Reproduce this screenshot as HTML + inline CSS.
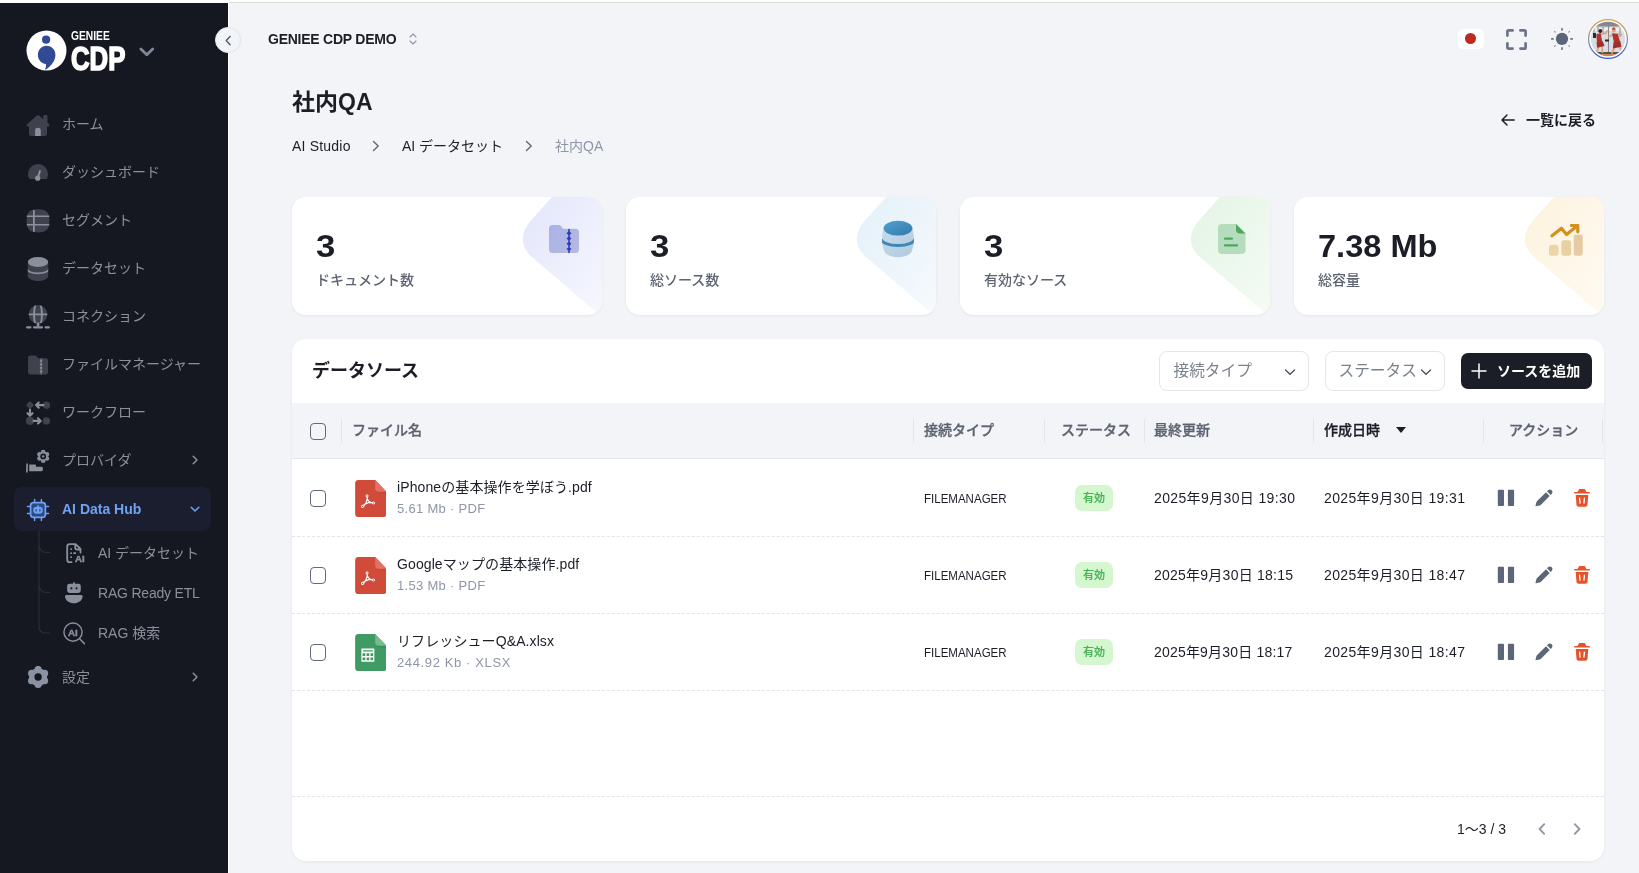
<!DOCTYPE html>
<html lang="ja">
<head>
<meta charset="utf-8">
<title>社内QA</title>
<style>
*{box-sizing:border-box;margin:0;padding:0}
html,body{width:1639px;height:873px;overflow:hidden;background:#fff}
body{font-family:"Liberation Sans","Noto Sans CJK JP",sans-serif;color:#1b1e27;position:relative;font-size:14px}
.topline{position:absolute;left:229px;top:2px;right:0;height:1px;background:#dddedc}
.main{position:absolute;left:229px;top:3px;right:0;bottom:0;background:#f3f4f8}
.sidebar{position:absolute;left:0;top:3px;width:228px;bottom:0;background:#151821}
.abs{position:absolute}
/* sidebar */
.logo-circle{position:absolute;left:27px;top:29px;width:39px;height:39px;border-radius:50%;background:#fff}
.logo-geniee{position:absolute;left:71px;top:29px;font-size:13.4px;font-weight:700;color:#fff;transform-origin:0 0;transform:scaleX(.765);line-height:14px;white-space:nowrap}
.logo-cdp{position:absolute;left:71px;top:41px;font-size:33px;font-weight:700;color:#fff;transform-origin:0 0;transform:scaleX(.78);line-height:36px;-webkit-text-stroke:1.6px #fff;white-space:nowrap}
.mi{position:absolute;left:14px;width:197px;height:44px;border-radius:8px;color:#8b909c;font-size:14px}
.mi .ic{position:absolute;left:12px;top:11px;width:24px;height:24px}
.mi .tx{position:absolute;left:48px;top:0;line-height:44px;white-space:nowrap}
.mi .ar{position:absolute;right:10px;top:16px;width:12px;height:12px}
.mi.active{background:#1a1e2e;color:#6fa1f5;font-weight:700}
.si{position:absolute;left:62px;height:40px;color:#8b909c;font-size:14px;width:150px}
.si .ic{position:absolute;left:0;top:8px;width:24px;height:24px}
.si .tx{position:absolute;left:36px;top:0;line-height:40px;white-space:nowrap}
/* header */
.collapse{position:absolute;left:215px;top:27px;width:26px;height:26px;border-radius:50%;background:#f3f4f8;border:1px solid #e6e8ee;box-shadow:0 0 2px rgba(0,0,0,.05)}
.ws{position:absolute;left:268px;top:29.500px;font-size:14px;letter-spacing:-.24px;font-weight:700;color:#1b1e27;line-height:18px;white-space:nowrap}
.title{position:absolute;left:292px;top:86px;font-size:23px;font-weight:700;line-height:32px;color:#1b1e27;white-space:nowrap}
.bc{position:absolute;top:136px;font-size:14px;line-height:20px;color:#1b1e27;white-space:nowrap}
.back{position:absolute;left:1526px;top:110px;font-size:14px;font-weight:700;line-height:20px;white-space:nowrap;color:#1b1e27}
/* cards */
.card{position:absolute;top:197px;width:310px;height:118px;background:#fff;border-radius:14px;box-shadow:0 1px 3px rgba(20,25,40,.06);overflow:hidden}
.card .num{position:absolute;left:24px;top:31px;transform-origin:0 50%;transform:scaleX(1.12);font-size:31px;font-weight:700;line-height:38px;color:#1b1e27;white-space:nowrap}
.card .lab{position:absolute;left:24px;top:73px;font-size:14px;line-height:20px;color:#5d6370;font-weight:500;white-space:nowrap}
.card svg.deco{position:absolute;right:0;top:0;width:90px;height:118px}
.card .cic{position:absolute;left:256px;top:26px;width:32px;height:32px}
/* table card */
.tcard{position:absolute;left:292px;top:339px;width:1312px;height:522px;background:#fff;border-radius:14px;box-shadow:0 1px 3px rgba(20,25,40,.06);overflow:hidden}
.tcard h2{position:absolute;left:20px;top:18px;font-size:18px;font-weight:700;line-height:28px;color:#1b1e27}
.sel{position:absolute;top:12px;height:40px;border:1px solid #e3e5ea;border-radius:8px;background:#fff;font-size:15.700px;color:#7a808c;line-height:37px;padding-left:13.500px;white-space:nowrap}
.addbtn{position:absolute;left:1169px;top:14px;width:131px;height:36px;border-radius:7px;background:#1b1e27;color:#fff;font-size:14px;font-weight:700;line-height:36px;white-space:nowrap}
.thead{position:absolute;left:0;top:64px;width:1312px;height:56px;background:#f3f4f8;border-bottom:1px solid #e3e5ea}
.th{position:absolute;top:0;line-height:54px;font-size:14px;font-weight:500;-webkit-text-stroke:.3px currentColor;color:#5d6370;white-space:nowrap}
.sep{position:absolute;top:16px;width:1px;height:24px;background:#e3e5ea}
.row{position:absolute;left:0;width:1312px;height:78px;border-bottom:1px dashed #e3e5ea}
.cb{position:absolute;left:17.500px;width:16.500px;height:16.500px;border:1.500px solid #5f6a7c;border-radius:4px;background:#fff}
.fic{position:absolute;left:62.600px;top:21px;width:31.600px;height:37.200px}
.fname{position:absolute;left:105px;top:18px;font-size:14px;line-height:20px;color:#1b1e27;white-space:nowrap;letter-spacing:.1px}
.fmeta{position:absolute;left:105px;top:40px;font-size:13px;line-height:20px;color:#8f96a6;white-space:nowrap;letter-spacing:.3px}
.ctype{position:absolute;left:632px;top:30px;font-size:12.600px;line-height:20px;color:#1b1e27;white-space:nowrap;transform-origin:0 50%;transform:scaleX(.915)}
.badge{position:absolute;left:783px;top:26px;width:38px;height:26px;border-radius:7px;background:#d4f7d0;color:#4bb257;font-size:11px;font-weight:500;-webkit-text-stroke:.2px currentColor;line-height:26px;text-align:center}
.dt{position:absolute;top:29px;font-size:14px;line-height:20px;color:#1b1e27;white-space:nowrap;letter-spacing:.37px}
.act{position:absolute;top:29px;width:20px;height:20px}
.foot{position:absolute;left:0;top:457px;width:1312px;border-top:1px dashed #e3e5ea;height:65px}
.pg{position:absolute;left:1165px;top:22px;font-size:14px;line-height:20px;color:#1b1e27;white-space:nowrap}
</style>
</head>
<body>
<div id="app" style="position:absolute;left:0;top:0;width:1639px;height:873px;will-change:transform">
<div class="topline"></div>
<div class="main"></div>
<aside class="sidebar"></aside>

<!-- SIDEBAR CONTENT -->
<div id="sb">
  <svg class="abs" style="left:26px;top:30px;width:41px;height:41px" viewBox="0 0 41 41"><circle cx="20.500" cy="20.500" r="20" fill="#fff"/><circle cx="20.100" cy="9.700" r="4.100" fill="#324a94"/><path fill="#324a94" d="M20.500 15.800c5.200 0 8.900 4 8.900 9.200 0 5.400-3.600 10.500-9.400 14.500-.5.300-1-.1-.8-.6.700-1.900 1-3.500.6-4.800-4.500-.7-7.900-4.400-7.900-9.100 0-5.200 3.700-9.200 8.600-9.200z"/></svg>
  <svg class="abs" style="left:139px;top:46px;width:16px;height:12px" viewBox="0 0 16 12"><path d="M1.900 3 7.800 8.800 13.700 3" fill="none" stroke="#7f8798" stroke-width="2.800" stroke-linecap="round" stroke-linejoin="round"/></svg>
  <div class="logo-geniee">GENIEE</div>
  <div class="logo-cdp">CDP</div>
<nav>
<div class="mi" style="top:102px"><svg class="ic" viewBox="0 0 24 24"><path fill="#3f424d" d="M10.900 2.600 1 11.200c-.9.800-.3 2.200.8 2.200H3v7.300A2.300 2.300 0 0 0 5.300 23h13.400a2.300 2.300 0 0 0 2.300-2.300v-7.300h1.200c1.100 0 1.700-1.400.8-2.200l-1.500-1.300V3.200c0-.6-.5-1.100-1.100-1.100h-2c-.6 0-1.100.5-1.100 1.100v3l-4.200-3.600a1.700 1.700 0 0 0-2.200 0z"/><path fill="#8a8f9c" d="M9.100 23v-5.300a2.850 2.850 0 0 1 5.700 0V23z"/></svg><span class="tx">ホーム</span></div>
<div class="mi" style="top:150px"><svg class="ic" viewBox="0 0 24 24"><path fill="#3f424d" d="M12 3A10 10 0 0 0 2 13c0 1.400.3 2.700.8 3.900.3.800 1.100 1.200 1.900 1.200h14.600c.8 0 1.600-.4 1.900-1.200.5-1.200.8-2.500.8-3.900A10 10 0 0 0 12 3z"/><path d="M13.900 10 11.800 17" stroke="#8a8f9c" stroke-width="2" stroke-linecap="round"/><circle cx="11.700" cy="17.200" r="2.600" fill="#8a8f9c"/></svg><span class="tx">ダッシュボード</span></div>
<div class="mi" style="top:198px"><svg class="ic" viewBox="0 0 24 24"><path fill="#3f424d" d="M12 .3c8.500 0 11.400 3 11.400 11.500S20.500 23.400 12 23.400.6 20.400.6 11.800 3.500.3 12 .3z"/><path fill="#8a8f9c" d="M7 1h1.800v21.700H7zM.8 6.400h22.500V8H.8zM.8 14.900h22.500v1.600H.8z"/></svg><span class="tx">セグメント</span></div>
<div class="mi" style="top:246px"><svg class="ic" viewBox="0 0 24 24"><clipPath id="sdb"><path d="M1.800 5v14c0 2.800 4.600 5 10.200 5s10.200-2.200 10.200-5V5z"/></clipPath><path fill="#3f424d" d="M1.800 5v14c0 2.800 4.600 5 10.200 5s10.200-2.200 10.200-5V5z"/><ellipse cx="12" cy="5" rx="10.200" ry="4.900" fill="#8a8f9c"/><path clip-path="url(#sdb)" fill="none" stroke="#8a8f9c" stroke-width="1.700" d="M1 11.500c0 2.800 4.800 4.800 11 4.800s11-2 11-4.800"/></svg><span class="tx">データセット</span></div>
<div class="mi" style="top:294px"><svg class="ic" viewBox="0 0 24 24"><clipPath id="sgl"><circle cx="12" cy="9.400" r="9.300"/></clipPath><circle cx="12" cy="9.400" r="9.300" fill="#3f424d"/><g clip-path="url(#sgl)" fill="none" stroke="#8a8f9c" stroke-width="1.900"><path d="M2 9.400h20M9.400 0C7.600 5 7.600 14 9.400 19M14.600 0c1.800 5 1.800 14 0 19"/></g><path fill="#8a8f9c" d="M10.700 17.500h2.700v4h-2.700z"/><g stroke="#8a8f9c" stroke-width="2.200" stroke-linecap="round"><path d="M1.100 22.300h3.300M8 22.300h8M19.600 22.300h3.300"/></g></svg><span class="tx">コネクション</span></div>
<div class="mi" style="top:342px"><svg class="ic" viewBox="0 0 24 24"><path fill="#3f424d" d="M2 5A2.500 2.500 0 0 1 4.500 2.500h4.200c.8 0 1.500.3 2 .9l1.100 1.300c.3.300.7.500 1.100.500h6.600A2.500 2.500 0 0 1 22 7.700v11.300a2.500 2.500 0 0 1-2.500 2.500h-15A2.500 2.500 0 0 1 2 19z"/><path fill="#8a8f9c" d="M14.600 5.500h1v16h-1zM13.500 8l1.600-1.500L16.700 8l-1.600 1.500zM13.500 11.500l1.600-1.500 1.600 1.500-1.600 1.500zM13.500 15l1.600-1.500 1.600 1.500-1.600 1.500zM13.500 18.500l1.600-1.500 1.600 1.500-1.600 1.500z"/></svg><span class="tx">ファイルマネージャー</span></div>
<div class="mi" style="top:390px"><svg class="ic" viewBox="0 0 24 24"><rect x="1.100" y="1.200" width="5.800" height="5.800" rx="1.200" transform="rotate(45 4 4.100)" fill="#3f424d"/><circle cx="20.400" cy="4.100" r="3.700" fill="#3f424d"/><rect x=".2" y="16.100" width="7.600" height="7.600" rx="2.400" fill="#3f424d"/><circle cx="20.400" cy="19.900" r="3.700" fill="#3f424d"/><g fill="none" stroke="#8a8f9c" stroke-width="2.100" stroke-linecap="round" stroke-linejoin="round"><path d="M17.500 4.100h-6.500M12.700 1.500 10.100 4.100l2.600 2.600M4 8.500v6M1.500 12.200l2.500 2.600 2.500-2.600M7.500 19.900h6.800M12 17.200l2.700 2.700-2.700 2.700"/></g></svg><span class="tx">ワークフロー</span></div>
<div class="mi" style="top:438px"><svg class="ic" viewBox="0 0 24 24"><g fill="#8a8f9c"><circle cx="20.92" cy="9.55" r="2.300"/><circle cx="17.20" cy="11.70" r="2.300"/><circle cx="13.48" cy="9.55" r="2.300"/><circle cx="13.48" cy="5.25" r="2.300"/><circle cx="17.20" cy="3.10" r="2.300"/><circle cx="20.92" cy="5.25" r="2.300"/><circle cx="17.200" cy="7.400" r="4.600"/></g><circle cx="17.200" cy="7.400" r="2.900" fill="#151821"/><circle cx="17.200" cy="7.400" r="1.200" fill="#8a8f9c"/><path fill="#8a8f9c" d="M.3 14.600h1.700l-.3 8.800H0zM3.200 15.400h5.300c.9 0 1.500.5 1.500 1.200v1.100h5.400c.9 0 1.500.8 1.500 1.700v1.200c0 .9-.6 1.600-1.500 1.600H3.200z"/></svg><span class="tx">プロバイダ</span><svg class="ar" viewBox="0 0 12 12"><path d="M4.200 2.200 8 6 4.200 9.800" fill="none" stroke="currentColor" stroke-width="1.500" stroke-linecap="round" stroke-linejoin="round"/></svg></div>
<div class="mi active" style="top:487px"><svg class="ic" viewBox="0 0 24 24"><g stroke="#6fa1f5" stroke-width="1.500" stroke-linecap="round" fill="none"><path d="M8.600 1.500v3M15.400 1.500v3M8.600 19.500v3M15.400 19.500v3M1.500 8.600h3M1.500 15.400h3M19.500 8.600h3M19.500 15.400h3"/></g><rect x="4.600" y="4.600" width="14.800" height="14.800" rx="2.800" fill="#2e4a82" stroke="#6fa1f5" stroke-width="1.700"/><path fill="#6fa1f5" d="M11.400 7h1.300v2.200h-1.300z"/><rect x="7.300" y="8.800" width="9.400" height="7" rx="3.300" fill="#6fa1f5"/><rect x="9.500" y="10.900" width="1.200" height="2.800" rx=".6" fill="#2e4a82"/><rect x="13.300" y="10.900" width="1.200" height="2.800" rx=".6" fill="#2e4a82"/></svg><span class="tx">AI Data Hub</span><svg class="ar" viewBox="0 0 12 12"><path d="M2.200 4.200 6 8 9.800 4.200" fill="none" stroke="currentColor" stroke-width="1.500" stroke-linecap="round" stroke-linejoin="round"/></svg></div>
<div class="mi" style="top:655px"><svg class="ic" viewBox="0 0 24 24"><g fill="#8b93a3"><circle cx="12.10" cy="3.40" r="3.500"/><circle cx="18.68" cy="7.20" r="3.500"/><circle cx="18.68" cy="14.80" r="3.500"/><circle cx="12.10" cy="18.60" r="3.500"/><circle cx="5.52" cy="14.80" r="3.500"/><circle cx="5.52" cy="7.20" r="3.500"/><circle cx="12.1" cy="11.0" r="9.100"/></g><circle cx="12.1" cy="11.0" r="3.700" fill="#151821"/></svg><span class="tx">設定</span><svg class="ar" viewBox="0 0 12 12"><path d="M4.200 2.200 8 6 4.200 9.800" fill="none" stroke="currentColor" stroke-width="1.500" stroke-linecap="round" stroke-linejoin="round"/></svg></div>
<svg class="abs" style="left:36px;top:531px;width:16px;height:106px" viewBox="0 0 16 106"><g fill="none" stroke="#2b2e39" stroke-width="1.200"><path d="M3 0v96a6 6 0 0 0 6 6h5M3 14.500a7 7 0 0 0 7 7h4M3 54.500a7 7 0 0 0 7 7h4"/></g></svg>
<div class="si" style="top:533px"><svg class="ic" viewBox="0 0 24 24"><g fill="none" stroke="#8a8f9c" stroke-width="1.800" stroke-linecap="round" stroke-linejoin="round"><path d="M9.500 21.200H7.700a2.500 2.500 0 0 1-2.500-2.500V5.700a2.500 2.500 0 0 1 2.500-2.500h6l4.800 4.800v3.500M13.200 3.700v2.800a2 2 0 0 0 2 2h2.800"/></g><g fill="#8a8f9c"><rect x="8.300" y="7.300" width="1.700" height="1.700" rx=".5"/><rect x="8.300" y="11.300" width="1.700" height="1.700" rx=".5"/><rect x="8.300" y="15.300" width="1.700" height="1.700" rx=".5"/><rect x="11.300" y="11.300" width="2.800" height="1.700" rx=".5"/></g><text x="13" y="21.200" font-family="Liberation Sans,sans-serif" font-weight="700" font-size="9.600" fill="#8a8f9c" stroke="#8a8f9c" stroke-width=".45">AI</text></svg><span class="tx">AI データセット</span></div>
<div class="si" style="top:573px"><svg class="ic" viewBox="0 0 24 24"><path fill="#8a8f9c" d="M11.100 1.300h1.700V4h-1.700z"/><rect x="5.100" y="2.800" width="13.700" height="9.200" rx="2.400" fill="#8a8f9c"/><circle cx="9.400" cy="7.300" r="1.100" fill="#151821"/><circle cx="14.500" cy="7.300" r="1.100" fill="#151821"/><path fill="#8a8f9c" d="M4.500 14.100h14.700c1 0 1.700.9 1.500 1.900-.8 3.800-4.300 6.300-8.800 6.300s-8.100-2.500-8.900-6.300c-.2-1 .5-1.900 1.500-1.900z"/></svg><span class="tx" style="letter-spacing:-.2px">RAG Ready ETL</span></div>
<div class="si" style="top:613px"><svg class="ic" viewBox="0 0 24 24"><circle cx="11" cy="11.100" r="9.100" fill="none" stroke="#8a8f9c" stroke-width="1.400"/><path d="M17.600 17.800l4.800 4.800" stroke="#8a8f9c" stroke-width="1.500" stroke-linecap="round"/><text x="6" y="14.500" font-family="Liberation Sans,sans-serif" font-weight="700" font-size="9.800" fill="#8a8f9c" stroke="#8a8f9c" stroke-width=".4">AI</text></svg><span class="tx">RAG 検索</span></div>
</nav>
</div>

<!-- HEADER -->
<div class="collapse"><svg class="abs" style="left:0;top:0;width:24px;height:24px" viewBox="0 0 24 24"><path d="M14.100 8.500 10.200 12.600l3.900 4.100" fill="none" stroke="#4b5a6e" stroke-width="1.400" stroke-linecap="round" stroke-linejoin="round"/></svg></div>
<div class="ws">GENIEE CDP DEMO</div>
<svg class="abs" style="left:408px;top:32px;width:10px;height:14px" viewBox="0 0 10 14"><path d="M2 5 5 2l3 3M2 9l3 3 3-3" fill="none" stroke="#8f96a6" stroke-width="1.100" stroke-linecap="round" stroke-linejoin="round"/></svg>
<div class="abs" style="left:1458px;top:29px;width:26px;height:20px;border-radius:5px;background:#fff"><div class="abs" style="left:7.400px;top:4.400px;width:11px;height:11px;border-radius:50%;background:#c0291f"></div></div>
<svg class="abs" style="left:1505px;top:28px;width:23px;height:23px" viewBox="0 0 23 23"><path d="M2.400 7.600V3.600a1.200 1.200 0 0 1 1.200-1.200h4M15.400 2.400h4a1.200 1.200 0 0 1 1.200 1.200v4M20.600 15.400v4a1.200 1.200 0 0 1-1.200 1.200h-4M7.600 20.600h-4a1.200 1.200 0 0 1-1.200-1.200v-4" fill="none" stroke="#6b7588" stroke-width="2.700" stroke-linecap="round" stroke-linejoin="round"/></svg>
<svg class="abs" style="left:1549px;top:26px;width:26px;height:26px" viewBox="0 0 26 26"><circle cx="13" cy="12.900" r="6.100" fill="#5b6678"/><g stroke="#6b7588" stroke-width="1.700" stroke-linecap="round"><path d="M13 2.700v1.300M13 21.900v1.300M2.800 12.900h1.300M21.900 12.900h1.300"/></g><g stroke="#8f96a6" stroke-width="1.200" stroke-linecap="round"><path d="M5.600 5.500l.6.600M20.400 5.500l-.6.600M5.600 20.300l.6-.6M20.400 20.300l-.6-.6"/></g></svg>
<svg class="abs" style="left:1588px;top:19px;width:40px;height:40px" viewBox="0 0 40 40"><defs><linearGradient id="rg" x1="0" y1="0" x2="0" y2="1"><stop offset="0" stop-color="#d9a441"/><stop offset=".5" stop-color="#8c8c9c"/><stop offset="1" stop-color="#3a62d8"/></linearGradient><clipPath id="av"><circle cx="20" cy="20" r="17.200"/></clipPath></defs><circle cx="20" cy="20" r="19.400" fill="#fff" stroke="url(#rg)" stroke-width="1.200"/><g clip-path="url(#av)"><rect x="0" y="0" width="40" height="40" fill="#d9dce2"/><rect x="0" y="0" width="40" height="7.500" fill="#87888c"/><path d="M4 9h32v3H4z" fill="#eceef2"/><g stroke="#6d717b" stroke-width=".8"><path d="M6 9v10M10 8v5M15 8v6M20.500 7v26M26 8v5M32 9v9"/></g><path d="M5 14h3v5H5z" fill="#2b2c33"/><path d="M17 20.500h4v2h-4z" fill="#24262b"/><rect x="0" y="33.300" width="40" height="1.500" fill="#1c1a1c"/><rect x="0" y="34.800" width="40" height="6" fill="#c98552"/><g stroke="#d9a27c" stroke-width="1.700" stroke-linecap="round" fill="none"><path d="M13 15.500 18 14l1-2M10.500 28 9 33.500M14 27l.5 6.500M24.500 16 21 17.500M30.500 15l3 .8M26.500 29 24 34M31.500 28l2.500 5"/></g><path d="M8.300 15.200 12.600 14l1.700 8.500L9 24.200z" fill="#ac352c"/><path d="M8.500 23.500l6.300-1.200 1.700 4.600-7.300 1.900z" fill="#a02f29"/><circle cx="12.300" cy="12" r="1.900" fill="#2a2326"/><path d="M24 14.300l5.800.4 2.300 8.300-6 1.200z" fill="#ac352c"/><path d="M25.500 23.200 32.300 22l1.200 5.800-8.700 1.700z" fill="#a02f29"/><circle cx="25.800" cy="11.700" r="1.900" fill="#d9a27c"/><path d="M23.800 10.800a2 2 0 0 1 4-.3z" fill="#c4403a"/></g></svg>

<h1 class="title">社内QA</h1>
<div class="bc" style="left:292px;letter-spacing:.2px">AI Studio</div>
<svg class="abs" style="left:372px;top:140px;width:8px;height:12px" viewBox="0 0 8 12"><path d="M1.500 1.500 6.200 6 1.500 10.500" fill="none" stroke="#5f6778" stroke-width="1.400" stroke-linecap="round" stroke-linejoin="round"/></svg>
<div class="bc" style="left:402px">AI データセット</div>
<svg class="abs" style="left:525px;top:140px;width:8px;height:12px" viewBox="0 0 8 12"><path d="M1.500 1.500 6.200 6 1.500 10.500" fill="none" stroke="#5f6778" stroke-width="1.400" stroke-linecap="round" stroke-linejoin="round"/></svg>
<div class="bc" style="left:555px;color:#8f96a6">社内QA</div>
<svg class="abs" style="left:1500px;top:113px;width:16px;height:14px" viewBox="0 0 16 14"><path d="M14.200 7H2.200M7 2 2 7l5 5" fill="none" stroke="#1b1e27" stroke-width="1.500" stroke-linecap="round" stroke-linejoin="round"/></svg>
<div class="back">一覧に戻る</div>

<!-- CARDS -->
<div class="card" style="left:292px"><svg class="abs" style="left:0;top:0;width:310px;height:118px" viewBox="0 0 310 118"><defs><linearGradient id="dg1" x1="0" y1="0" x2="1" y2="1" gradientUnits="objectBoundingBox"><stop offset="0" stop-color="#e3e6fb"/><stop offset="1" stop-color="#f6f7fe"/></linearGradient></defs><path fill="url(#dg1)" d="M260 0 238.500 24C228 36 228 50 240 60L310 120V0z"/></svg><svg class="abs" style="left:257px;top:27px;width:30px;height:30px" viewBox="0 0 30 30"><defs><linearGradient id="f1" x1="0" y1="0" x2="1" y2="1"><stop offset="0" stop-color="#aab1e8"/><stop offset="1" stop-color="#b5badf"/></linearGradient></defs><path fill="url(#f1)" d="M0 4.500A3.500 3.500 0 0 1 3.500 1h5.800c1.100 0 2.100.5 2.800 1.300l1.300 1.600c.5.600 1.200.9 2 .9h11.100A3.500 3.500 0 0 1 30 8.300v17.200a3.500 3.500 0 0 1-3.500 3.500h-23A3.500 3.500 0 0 1 0 25.500z"/><path fill="#2a3cb8" d="M19.200 5h1.600v24h-1.600zM17.500 9.200 20 7l2.500 2.200L20 11.400zM17.500 14.500l2.500-2.200 2.500 2.200-2.500 2.200zM17.500 19.800l2.500-2.200 2.500 2.200L20 22zM17.500 25.100l2.500-2.200 2.500 2.200-2.500 2.200z"/></svg><div class="num">3</div><div class="lab">ドキュメント数</div></div>
<div class="card" style="left:626px"><svg class="abs" style="left:0;top:0;width:310px;height:118px" viewBox="0 0 310 118"><defs><linearGradient id="dg2" x1="0" y1="0" x2="1" y2="1" gradientUnits="objectBoundingBox"><stop offset="0" stop-color="#e4f0f9"/><stop offset="1" stop-color="#f6fafd"/></linearGradient></defs><path fill="url(#dg2)" d="M260 0 238.500 24C228 36 228 50 240 60L310 120V0z"/></svg><svg class="abs" style="left:255px;top:23px;width:34px;height:38px" viewBox="0 0 34 38"><defs><linearGradient id="f2" x1="0" y1="0" x2="1" y2="1"><stop offset="0" stop-color="#4fa0cf"/><stop offset="1" stop-color="#3579ad"/></linearGradient><linearGradient id="f2b" x1="0" y1="0" x2="1" y2="1"><stop offset="0" stop-color="#c3dcec"/><stop offset="1" stop-color="#b3c9dd"/></linearGradient></defs><path fill="url(#f2b)" d="M2.700 8C1.500 13 1 17 1 20c0 4 1 8 2.200 11C4 34.500 10 37.200 17 37.200S30 34.500 30.800 31C32 28 33 24 33 20c0-3-.5-7-1.700-12z"/><clipPath id="dbc"><path d="M2.700 8C1.500 13 1 17 1 20c0 4 1 8 2.200 11C4 34.500 10 37.200 17 37.200S30 34.500 30.800 31C32 28 33 24 33 20c0-3-.5-7-1.700-12z"/></clipPath><path clip-path="url(#dbc)" fill="none" stroke="#3d86b8" stroke-width="3" d="M0 18.800C0 22.500 8 25.500 17 25.500s17-3 17-6.700"/><ellipse cx="17" cy="8.200" rx="14.400" ry="7.400" fill="url(#f2)"/></svg><div class="num">3</div><div class="lab">総ソース数</div></div>
<div class="card" style="left:960px"><svg class="abs" style="left:0;top:0;width:310px;height:118px" viewBox="0 0 310 118"><defs><linearGradient id="dg3" x1="0" y1="0" x2="1" y2="1" gradientUnits="objectBoundingBox"><stop offset="0" stop-color="#e3f4e4"/><stop offset="1" stop-color="#f5fbf5"/></linearGradient></defs><path fill="url(#dg3)" d="M260 0 238.500 24C228 36 228 50 240 60L310 120V0z"/></svg><svg class="abs" style="left:258px;top:26px;width:28px;height:32px" viewBox="0 0 28 32"><path fill="#b5dcbc" d="M4 1h14l9.500 9.500V27a4 4 0 0 1-4 4H4a4 4 0 0 1-4-4V5a4 4 0 0 1 4-4z"/><path fill="#4fa860" d="M18 1l9.500 9.500H22a4 4 0 0 1-4-4z"/><path d="M7 15.700h7M7 22.400h12" stroke="#4fa860" stroke-width="2.300" stroke-linecap="round"/></svg><div class="num">3</div><div class="lab">有効なソース</div></div>
<div class="card" style="left:1294px"><svg class="abs" style="left:0;top:0;width:310px;height:118px" viewBox="0 0 310 118"><defs><linearGradient id="dg4" x1="0" y1="0" x2="1" y2="1" gradientUnits="objectBoundingBox"><stop offset="0" stop-color="#fdf2de"/><stop offset="1" stop-color="#fffaf2"/></linearGradient></defs><path fill="url(#dg4)" d="M260 0 238.500 24C228 36 228 50 240 60L310 120V0z"/></svg><svg class="abs" style="left:253px;top:26.500px;width:36px;height:36px" viewBox="0 0 36 36"><rect x="2" y="20.800" width="9.600" height="11" rx="2.500" fill="#ecd5a6"/><rect x="14.300" y="16.200" width="9.900" height="15.600" rx="2.500" fill="#e9d0a3"/><rect x="26.700" y="10.400" width="9" height="21.400" rx="2.500" fill="#e5cba3"/><path d="M5 11.700 14.500 4.300 19.500 10.600 30.500 1.800M24.500 1.500h6.300v6.300" fill="none" stroke="#d4901c" stroke-width="3.200" stroke-linecap="round" stroke-linejoin="round"/></svg><div class="num" style="transform:scaleX(1.05)">7.38 Mb</div><div class="lab">総容量</div></div>

<!-- TABLE CARD -->
<div class="tcard">
  <h2>データソース</h2>
  <div class="sel" style="left:867px;width:150px">接続タイプ<svg class="abs" style="left:124px;top:15px;width:12px;height:10px" viewBox="0 0 12 10"><path d="M1.500 3 6 7.200 10.500 3" fill="none" stroke="#4b5262" stroke-width="1.400" stroke-linecap="round" stroke-linejoin="round"/></svg></div>
  <div class="sel" style="left:1033px;width:120px;padding-left:12.500px">ステータス<svg class="abs" style="left:94px;top:15px;width:12px;height:10px" viewBox="0 0 12 10"><path d="M1.500 3 6 7.200 10.500 3" fill="none" stroke="#4b5262" stroke-width="1.400" stroke-linecap="round" stroke-linejoin="round"/></svg></div>
  <div class="addbtn"><svg class="abs" style="left:10px;top:10px;width:16px;height:16px" viewBox="0 0 16 16"><path d="M8 1v14M1 8h14" stroke="#fff" stroke-width="1.500" stroke-linecap="round"/></svg><span style="position:absolute;left:36px">ソースを追加</span></div>
  <div class="thead">
    <div class="cb" style="top:20px;background:transparent"></div>
    <div class="sep" style="left:49px"></div>
    <div class="th" style="left:60px">ファイル名</div>
    <div class="sep" style="left:621px"></div>
    <div class="th" style="left:632px">接続タイプ</div>
    <div class="sep" style="left:752px"></div>
    <div class="th" style="left:769px">ステータス</div>
    <div class="sep" style="left:852px"></div>
    <div class="th" style="left:862px">最終更新</div>
    <div class="sep" style="left:1021px"></div>
    <div class="th" style="left:1032px;color:#1b1e27">作成日時</div><svg class="abs" style="left:1103px;top:23px;width:12px;height:8px" viewBox="0 0 12 8"><path d="M1 1h10L6 7z" fill="#1b1e27"/></svg>
    <div class="sep" style="left:1191px"></div>
    <div class="th" style="left:1217px">アクション</div>
    <div class="sep" style="left:1310px"></div>
  </div>
  <div class="row" style="top:120px">
    <div class="cb" style="top:31px"></div>
    <svg class="fic" viewBox="0 0 32 38"><path fill="#d14b3b" d="M3.500 0H20.500L32 12v22.500a3.500 3.500 0 0 1-3.500 3.500h-25A3.500 3.500 0 0 1 0 34.500v-31A3.500 3.500 0 0 1 3.500 0z"/><path fill="#c4422f" opacity=".5" d="M20.500 12.800 32 12v2.500z"/><path fill="#df7264" d="M20.500 0 32 12h-8a3.500 3.500 0 0 1-3.500-3.500z"/><g fill="none" stroke="#fff" stroke-width="1.200" stroke-linecap="round" stroke-linejoin="round"><path d="M12.200 16.500c.5 2.300.1 4.500-1 6.500-.9 1.600-2 2.800-3.200 3.600M12.200 16.500c-.2 2.400.6 4.600 2.400 5.800 1.200.8 2.500 1.100 3.900 1.100M8 26.600c1.500-1.700 3.500-2.900 5.700-3.500 1.600-.4 3.200-.4 4.800.3"/></g><g fill="#d14b3b" stroke="#fff" stroke-width="1"><ellipse cx="12.200" cy="16.300" rx="1" ry="1.200"/><ellipse cx="7.800" cy="26.800" rx="1.400" ry="1" transform="rotate(-35 7.800 26.800)"/><ellipse cx="18.700" cy="23.500" rx="1.300" ry="1"/></g></svg><div class="fname">iPhoneの基本操作を学ぼう.pdf</div><div class="fmeta">5.61 Mb · PDF</div>
    <div class="ctype">FILEMANAGER</div><div class="badge">有効</div>
    <div class="dt" style="left:862px">2025年9月30日 19:30</div><div class="dt" style="left:1032px">2025年9月30日 19:31</div><svg class="abs" style="left:1205px;top:30px;width:18px;height:18px" viewBox="0 0 18 18"><rect x=".8" y=".7" width="6.200" height="16.400" rx="1" fill="#5b6678"/><rect x="10.900" y=".7" width="6.200" height="16.400" rx="1" fill="#5b6678"/></svg><svg class="abs" style="left:1243px;top:30px;width:18px;height:18px" viewBox="0 0 18 18"><path fill="#5b6678" d="M11 3.300 14.700 7 6 15.700c-.4.400-.9.700-1.500.8L.9 17.300c-.3.100-.5-.200-.4-.5l.8-3.400c.1-.6.400-1.100.8-1.500zM12 2.300l1-1c1-1 2.700-1 3.700 0s1 2.700 0 3.700l-1 1z"/></svg><svg class="abs" style="left:1282px;top:30px;width:16px;height:18px" viewBox="0 0 16 18"><path fill="#e5532a" d="M5.200 0h5.600l1.700 3H15.300c.4 0 .7.300.7.700s-.3.700-.7.700H.7C.3 4.400 0 4.100 0 3.700S.3 3 .7 3H3.500zM1.700 6h12.600l-.8 9.800c-.1 1.100-1 2-2.200 2H4.700c-1.200 0-2.100-.9-2.200-2zm3.800 2.500c-.4 0-.7.300-.6.700l.5 5c0 .4.300.6.700.6s.6-.3.600-.7l-.5-5c0-.4-.3-.6-.7-.6zm5 0c-.4 0-.7.200-.7.600l-.5 5c0 .4.200.7.600.7s.7-.2.700-.6l.5-5c0-.4-.2-.7-.6-.7z"/></svg>
  </div>
  <div class="row" style="top:197px">
    <div class="cb" style="top:31px"></div>
    <svg class="fic" viewBox="0 0 32 38"><path fill="#d14b3b" d="M3.500 0H20.500L32 12v22.500a3.500 3.500 0 0 1-3.500 3.500h-25A3.500 3.500 0 0 1 0 34.500v-31A3.500 3.500 0 0 1 3.500 0z"/><path fill="#c4422f" opacity=".5" d="M20.500 12.800 32 12v2.500z"/><path fill="#df7264" d="M20.500 0 32 12h-8a3.500 3.500 0 0 1-3.500-3.500z"/><g fill="none" stroke="#fff" stroke-width="1.200" stroke-linecap="round" stroke-linejoin="round"><path d="M12.200 16.500c.5 2.300.1 4.500-1 6.500-.9 1.600-2 2.800-3.200 3.600M12.200 16.500c-.2 2.400.6 4.600 2.400 5.800 1.200.8 2.500 1.100 3.900 1.100M8 26.600c1.500-1.700 3.500-2.900 5.700-3.500 1.600-.4 3.200-.4 4.800.3"/></g><g fill="#d14b3b" stroke="#fff" stroke-width="1"><ellipse cx="12.200" cy="16.300" rx="1" ry="1.200"/><ellipse cx="7.800" cy="26.800" rx="1.400" ry="1" transform="rotate(-35 7.800 26.800)"/><ellipse cx="18.700" cy="23.500" rx="1.300" ry="1"/></g></svg><div class="fname">Googleマップの基本操作.pdf</div><div class="fmeta">1.53 Mb · PDF</div>
    <div class="ctype">FILEMANAGER</div><div class="badge">有効</div>
    <div class="dt" style="left:862px;letter-spacing:.24px">2025年9月30日 18:15</div><div class="dt" style="left:1032px">2025年9月30日 18:47</div><svg class="abs" style="left:1205px;top:30px;width:18px;height:18px" viewBox="0 0 18 18"><rect x=".8" y=".7" width="6.200" height="16.400" rx="1" fill="#5b6678"/><rect x="10.900" y=".7" width="6.200" height="16.400" rx="1" fill="#5b6678"/></svg><svg class="abs" style="left:1243px;top:30px;width:18px;height:18px" viewBox="0 0 18 18"><path fill="#5b6678" d="M11 3.300 14.700 7 6 15.700c-.4.400-.9.700-1.500.8L.9 17.300c-.3.100-.5-.200-.4-.5l.8-3.400c.1-.6.400-1.100.8-1.500zM12 2.300l1-1c1-1 2.700-1 3.700 0s1 2.700 0 3.700l-1 1z"/></svg><svg class="abs" style="left:1282px;top:30px;width:16px;height:18px" viewBox="0 0 16 18"><path fill="#e5532a" d="M5.200 0h5.600l1.700 3H15.300c.4 0 .7.300.7.700s-.3.700-.7.700H.7C.3 4.400 0 4.100 0 3.700S.3 3 .7 3H3.500zM1.700 6h12.600l-.8 9.800c-.1 1.100-1 2-2.200 2H4.700c-1.200 0-2.100-.9-2.200-2zm3.800 2.500c-.4 0-.7.300-.6.700l.5 5c0 .4.300.6.700.6s.6-.3.600-.7l-.5-5c0-.4-.3-.6-.7-.6zm5 0c-.4 0-.7.200-.7.600l-.5 5c0 .4.200.7.600.7s.7-.2.700-.6l.5-5c0-.4-.2-.7-.6-.7z"/></svg>
  </div>
  <div class="row" style="top:274px">
    <div class="cb" style="top:31px"></div>
    <svg class="fic" viewBox="0 0 32 38"><path fill="#3f9a63" d="M3.500 0H20.500L32 12v22.500a3.500 3.500 0 0 1-3.500 3.500h-25A3.500 3.500 0 0 1 0 34.500v-31A3.500 3.500 0 0 1 3.500 0z"/><path fill="#2f8552" opacity=".5" d="M20.500 12.800 32 12v2.500z"/><path fill="#74bb8d" d="M20.500 0 32 12h-8a3.500 3.500 0 0 1-3.500-3.500z"/><path fill="#fff" fill-rule="evenodd" d="M6.400 14.900h13.200v13.400H6.400zM7.900 16.500v1.300h10.200v-1.300zM7.600 19.700v2.700h2.800v-2.700zm4.100 0v2.700h2.700v-2.700zm4 0v2.700h2.700v-2.700zM7.600 24.100v2.700h2.800v-2.700zm4.100 0v2.700h2.700v-2.700zm4 0v2.700h2.700v-2.700z"/></svg><div class="fname">リフレッシューQ&amp;A.xlsx</div><div class="fmeta" style="letter-spacing:.62px">244.92 Kb · XLSX</div>
    <div class="ctype">FILEMANAGER</div><div class="badge">有効</div>
    <div class="dt" style="left:862px;letter-spacing:.19px">2025年9月30日 18:17</div><div class="dt" style="left:1032px">2025年9月30日 18:47</div><svg class="abs" style="left:1205px;top:30px;width:18px;height:18px" viewBox="0 0 18 18"><rect x=".8" y=".7" width="6.200" height="16.400" rx="1" fill="#5b6678"/><rect x="10.900" y=".7" width="6.200" height="16.400" rx="1" fill="#5b6678"/></svg><svg class="abs" style="left:1243px;top:30px;width:18px;height:18px" viewBox="0 0 18 18"><path fill="#5b6678" d="M11 3.300 14.700 7 6 15.700c-.4.400-.9.700-1.500.8L.9 17.300c-.3.100-.5-.200-.4-.5l.8-3.400c.1-.6.400-1.100.8-1.500zM12 2.300l1-1c1-1 2.700-1 3.700 0s1 2.700 0 3.700l-1 1z"/></svg><svg class="abs" style="left:1282px;top:30px;width:16px;height:18px" viewBox="0 0 16 18"><path fill="#e5532a" d="M5.200 0h5.600l1.700 3H15.300c.4 0 .7.300.7.700s-.3.700-.7.700H.7C.3 4.400 0 4.100 0 3.700S.3 3 .7 3H3.500zM1.700 6h12.600l-.8 9.800c-.1 1.100-1 2-2.200 2H4.700c-1.200 0-2.100-.9-2.200-2zm3.800 2.500c-.4 0-.7.300-.6.700l.5 5c0 .4.300.6.700.6s.6-.3.600-.7l-.5-5c0-.4-.3-.6-.7-.6zm5 0c-.4 0-.7.200-.7.600l-.5 5c0 .4.200.7.600.7s.7-.2.700-.6l.5-5c0-.4-.2-.7-.6-.7z"/></svg>
  </div>
  <div class="foot"><div class="pg">1〜3 / 3</div><svg class="abs" style="left:1245px;top:25px;width:10px;height:14px" viewBox="0 0 10 14"><path d="M7.200 2.200 2.600 7l4.600 4.800" fill="none" stroke="#8f96a6" stroke-width="1.900" stroke-linecap="round" stroke-linejoin="round"/></svg><svg class="abs" style="left:1280px;top:25px;width:10px;height:14px" viewBox="0 0 10 14"><path d="M2.800 2.200 7.400 7l-4.600 4.800" fill="none" stroke="#8f96a6" stroke-width="1.900" stroke-linecap="round" stroke-linejoin="round"/></svg></div>
</div>
</div>
</body>
</html>
